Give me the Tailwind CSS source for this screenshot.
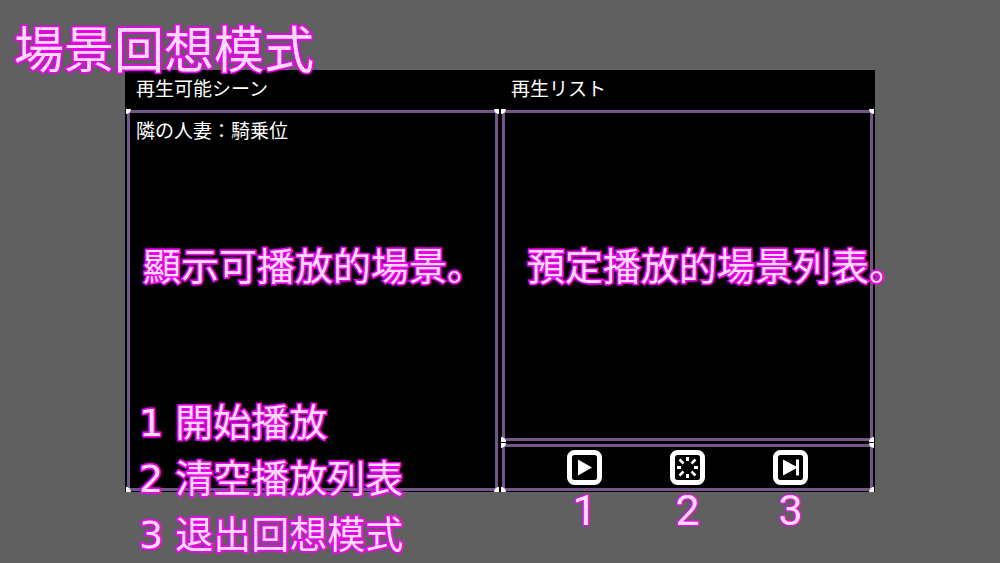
<!DOCTYPE html>
<html lang="zh-Hant">

<head>
    <meta charset="UTF-8" />
    <meta name="viewport" content="width=device-width, initial-scale=1.0" />
    <title>場景回想模式</title>
    <script src="https://cdn.jsdelivr.net/npm/@tailwindcss/browser@4"></script>

    <style>
        body {
            font-family: "Noto Sans CJK JP", sans-serif;
        }

        .note {
            font-family: "DejaVu Sans", "Noto Sans CJK JP", sans-serif;
            color: #ffdcff;
            white-space: nowrap;
            paint-order: stroke fill;
            -webkit-text-stroke: 3px #f010f0;
            text-shadow: 0 0 2px #f0f, 0 0 3px #e000e0, 0 0 4px #d800d8;
        }

        .note-number {
            font-family: Roboto, sans-serif;
            color: #ffdcff;
            paint-order: stroke fill;
            -webkit-text-stroke: 2px #e818e8;
            text-shadow: 0 0 2px #f0f, 0 0 3px #d800d8;
        }
    </style>
</head>

<body class="bg-[#606060] min-h-screen relative overflow-hidden">
    <!-- Title -->
    <h1 lang="ja" class="note absolute left-[14px] top-[21px] text-[50px] leading-[60px]">場景回想模式</h1>

    <main lang="ja" class="pt-[70px]">
        <div class="w-3/4 mx-auto bg-black px-[2px] pb-px grid grid-cols-2 gap-x-1 text-white text-[19px]">
            <!-- Playable scenes -->
            <section class="flex flex-col">
                <h2 class="h-10 pl-[9px] leading-9">再生可能シーン</h2>
                <div class="relative flex-1 border-[3px] border-[#74568a] px-[6px] py-[3px]">
                    <i class="absolute size-[5px] -left-1 -top-1 bg-white rounded-br-full"></i>
                    <i class="absolute size-[5px] -right-1 -top-1 bg-white rounded-bl-full"></i>
                    <i class="absolute size-[5px] -left-1 -bottom-1 bg-white rounded-tr-full"></i>
                    <i class="absolute size-[5px] -right-1 -bottom-1 bg-white rounded-tl-full"></i>
                    <ul>
                        <li><button type="button" class="leading-7">隣の人妻：騎乗位</button></li>
                    </ul>
                    <p class="note absolute left-[13px] top-[130px] text-[38px] leading-[48px]">顯示可播放的場景。</p>
                    <div class="note absolute left-[9px] top-[282px] text-[38px] leading-[56px]">
                        <p>1 開始播放</p>
                        <p>2 清空播放列表</p>
                        <p>3 退出回想模式</p>
                    </div>
                </div>
            </section>

            <!-- Play list -->
            <section class="flex flex-col">
                <h2 class="h-10 pl-[9px] leading-9">再生リスト</h2>
                <div class="relative h-[331px] border-[3px] border-[#74568a]">
                    <i class="absolute size-[5px] -left-1 -top-1 bg-white rounded-br-full"></i>
                    <i class="absolute size-[5px] -right-1 -top-1 bg-white rounded-bl-full"></i>
                    <i class="absolute size-[5px] -left-1 -bottom-1 bg-white rounded-tr-full"></i>
                    <i class="absolute size-[5px] -right-1 -bottom-1 bg-white rounded-tl-full"></i>
                    <p class="note absolute left-[22px] top-[130px] text-[38px] leading-[48px]">預定播放的場景列表。</p>
                </div>

                <!-- Controls -->
                <div class="relative mt-[3px] h-[47px] border-[3px] border-[#74568a] flex items-center justify-center gap-[68px]">
                    <i class="absolute size-[5px] -left-1 -top-1 bg-white rounded-br-full"></i>
                    <i class="absolute size-[5px] -right-1 -top-1 bg-white rounded-bl-full"></i>
                    <i class="absolute size-[5px] -left-1 -bottom-1 bg-white rounded-tr-full"></i>
                    <i class="absolute size-[5px] -right-1 -bottom-1 bg-white rounded-tl-full"></i>
                    <div class="relative">
                        <button type="button" aria-label="Play" class="block">
                            <svg class="size-[35px]" viewBox="0 0 35 35" fill="#fff">
                                <rect x="2.5" y="2.5" width="30" height="30" rx="5" fill="#000" stroke="#fff" stroke-width="5" />
                                <path d="M11 9.500 25 17.500 11 25.500Z" />
                            </svg>
                        </button>
                        <span class="note-number absolute inset-x-0 top-9 text-center text-[43px] leading-[48px]">1</span>
                    </div>
                    <div class="relative">
                        <button type="button" aria-label="Clear" class="block">
                            <svg class="size-[35px]" viewBox="0 0 35 35" fill="none" stroke="#fff">
                                <rect x="2.5" y="2.5" width="30" height="30" rx="5" fill="#000" stroke-width="5" />
                                <path stroke-width="3" d="M17.5 7v4M17.5 24v4M7 17.5h4M24 17.5h4" />
                                <path stroke-width="2.5" d="M9.5 9.5l4 4M21.5 21.5l4 4M25.5 9.5l-4 4M13.5 21.5l-4 4" />
                            </svg>
                        </button>
                        <span class="note-number absolute inset-x-0 top-9 text-center text-[43px] leading-[48px]">2</span>
                    </div>
                    <div class="relative">
                        <button type="button" aria-label="Exit" class="block">
                            <svg class="size-[35px]" viewBox="0 0 35 35" fill="#fff">
                                <rect x="2.5" y="2.5" width="30" height="30" rx="5" fill="#000" stroke="#fff" stroke-width="5" />
                                <path d="M10 9.500 23 16.500V9.500H26V25.500H23V18.500L10 25.500Z" />
                            </svg>
                        </button>
                        <span class="note-number absolute inset-x-0 top-9 text-center text-[43px] leading-[48px]">3</span>
                    </div>
                </div>
            </section>
        </div>
    </main>
</body>

</html>
